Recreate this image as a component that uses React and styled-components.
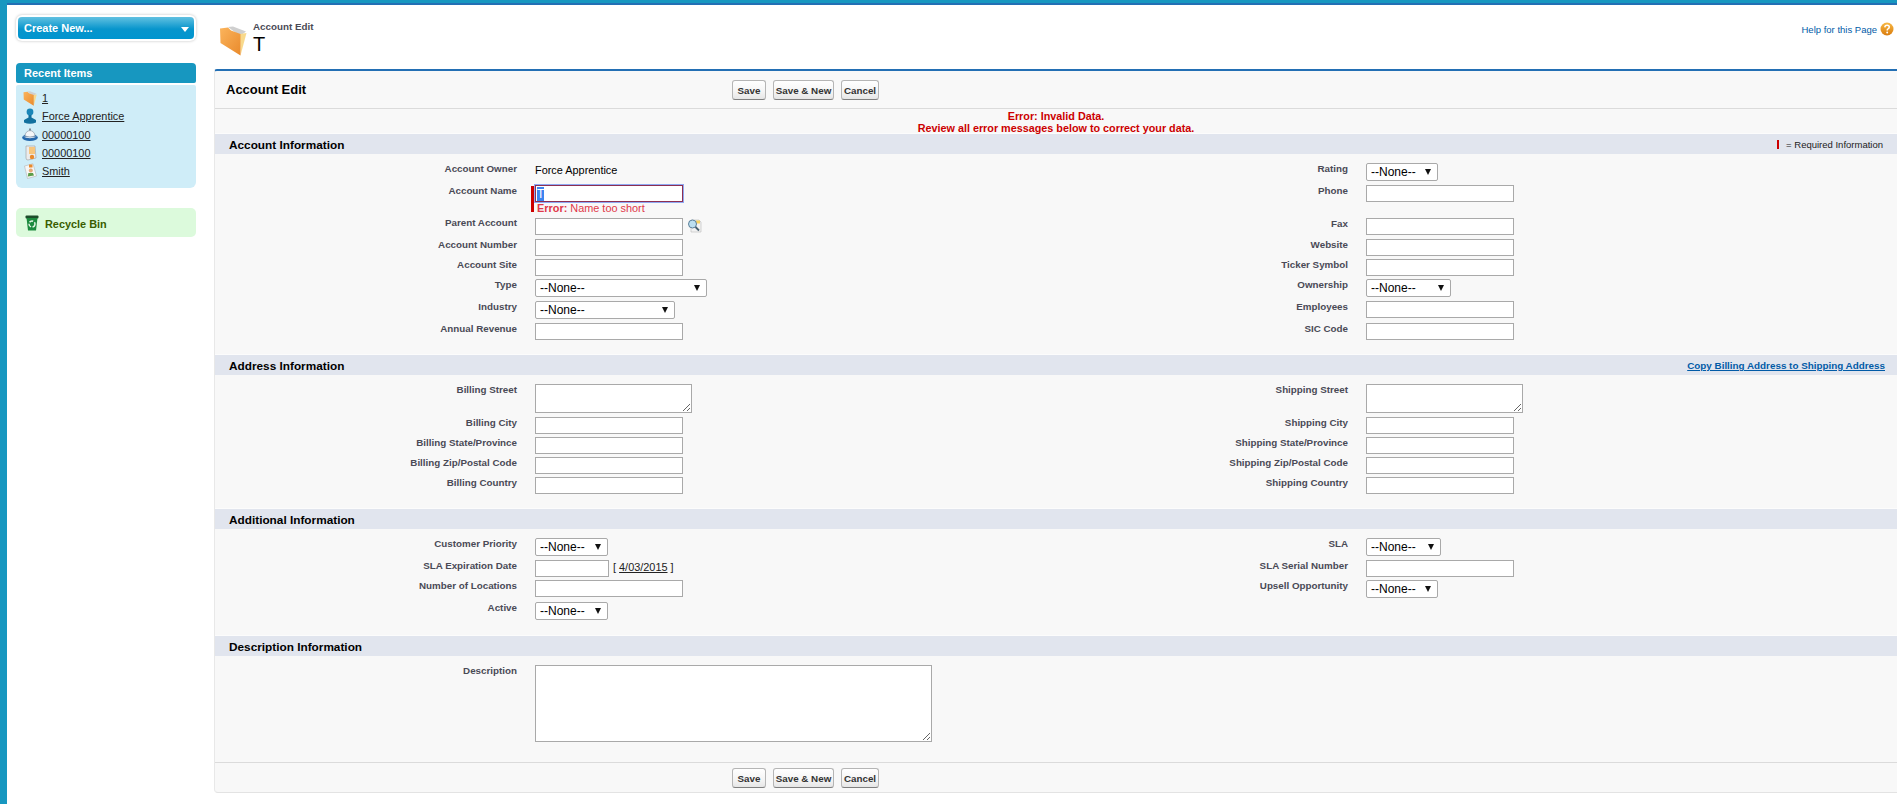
import React, { useEffect, useRef } from "react";
import styled, { createGlobalStyle } from "styled-components";

const GlobalStyle = createGlobalStyle`
  html, body {
    margin: 0;
    padding: 0;
    background: #fff;
    font-family: "Liberation Sans", Arial, sans-serif;
  }
  ::selection {
    background: #3b84f0;
    color: #fff;
  }
`;

const Page = styled.div`
  height: 804px;
  overflow: hidden;
  display: flex;
  flex-direction: column;
  background: #fff;
  border-top: 3px solid #1797c0;
  border-left: 7px solid #1797c0;
  box-sizing: border-box;
`;

const TopStripe = styled.div`
  height: 2px;
  background: #236fb4;
  flex: none;
`;

const Body = styled.div`
  display: flex;
  flex: 1;
  min-height: 0;
`;

/* sidebar */
const Sidebar = styled.aside`
  width: 207px;
  flex: none;
  box-sizing: border-box;
  padding: 12px 18px 0 9px;
`;

const CreateButton = styled.button`
  display: flex;
  align-items: center;
  justify-content: space-between;
  width: 176px;
  height: 22px;
  margin-left: 2px;
  padding: 0 5px 0 6px;
  border: 0;
  border-radius: 4px;
  background: linear-gradient(#62c1e1, #0795cc 55%, #0095cf);
  box-shadow: 0 0 0 2px #fff, 0 0 3px 2px rgba(0, 0, 0, 0.25);
  color: #fff;
  font: bold 11px "Liberation Sans", Arial, sans-serif;
`;

const CreateArrow = styled.span`
  width: 0;
  height: 0;
  border-left: 4px solid transparent;
  border-right: 4px solid transparent;
  border-top: 5px solid #fff;
  margin-top: 2px;
`;

const RecentHeader = styled.div`
  margin-top: 24px;
  height: 20px;
  line-height: 20px;
  padding-left: 8px;
  border-radius: 4px 4px 2px 2px;
  background: #1797c0;
  color: #fff;
  font-size: 11px;
  font-weight: bold;
`;

const RecentBody = styled.div`
  margin-top: 2px;
  padding: 4px 0 8px 6px;
  border-radius: 2px 2px 6px 6px;
  background: #cfedf8;
`;

const RecentRow = styled.div`
  display: flex;
  align-items: center;
  gap: 4px;
  height: ${(p) => p.$h}px;
`;

const IconSlot = styled.span`
  display: flex;
  align-items: center;
  justify-content: center;
  width: 16px;
  height: 16px;
  flex: none;
`;

const RecentLink = styled.a`
  color: #222;
  font-size: 10.9px;
  text-decoration: underline;
`;

const RecycleBox = styled.div`
  display: flex;
  align-items: center;
  gap: 6px;
  box-sizing: border-box;
  height: 29px;
  margin-top: 20px;
  padding: 2px 0 0 9px;
  border-radius: 5px;
  background: #dcfadc;
  color: #3a5d00;
  font-size: 10.9px;
  font-weight: bold;

  svg {
    margin-top: -2px;
  }
`;

/* main column */
const Main = styled.main`
  flex: 1;
  min-width: 0;
`;

const PageHead = styled.header`
  display: flex;
  height: 64px;
  box-sizing: border-box;
  padding: 15px 3px 0 5px;
`;

const HeadIcon = styled.span`
  display: block;
  width: 30px;
  margin-top: 6px;
`;

const HeadText = styled.div`
  margin-left: 4px;
  flex: 1;
`;

const HeadSmall = styled.div`
  margin-top: 1px;
  color: #4a4a56;
  font-size: 9.8px;
  font-weight: bold;
  line-height: 12px;
`;

const HeadTitle = styled.h1`
  margin: 0;
  color: #000;
  font-size: 20px;
  font-weight: normal;
  line-height: 22px;
`;

const HelpLink = styled.a`
  display: flex;
  align-items: center;
  gap: 3px;
  height: 16px;
  margin-top: 1px;
  color: #015ba7;
  font-size: 9.5px;
`;

const Panel = styled.section`
  box-sizing: border-box;
  height: 724px;
  border-top: 2px solid #236fb4;
  border-left: 1px solid #e8e8e8;
  border-bottom: 1px solid #e3e3e3;
  border-radius: 3px 0 0 4px;
  background: #f8f8f8;
`;

const TitleBar = styled.div`
  display: flex;
  align-items: flex-start;
  height: 38px;
  box-sizing: border-box;
  padding: 9px 0 0 11px;
  border-bottom: 1px solid #dbdbdb;
`;

const PanelTitle = styled.h2`
  width: 506px;
  margin: 0;
  color: #000;
  font-size: 13px;
  line-height: 20px;
`;

const ButtonRow = styled.div`
  display: flex;
  gap: 7px;
`;

const Btn = styled.button`
  width: ${(p) => p.$w}px;
  height: 20px;
  padding: 0;
  border: 1px solid #b5b5b5;
  border-bottom-color: #7f7f7f;
  border-radius: 3px;
  background: linear-gradient(#fff, #f4f4f4 60%, #e6e6e6);
  color: #333;
  font: bold 9.8px "Liberation Sans", Arial, sans-serif;
`;

const ErrorBlock = styled.div`
  height: 25px;
  box-sizing: border-box;
  padding-top: 1px;
  color: #cc0000;
  font-size: 10.8px;
  font-weight: bold;
  line-height: 12px;
  text-align: center;
`;

const SectionHead = styled.div`
  display: flex;
  align-items: center;
  justify-content: space-between;
  box-sizing: border-box;
  height: 20px;
  padding: 1px ${(p) => p.$right}px 0 14px;
  background: #e1e5ee;
  box-shadow: 0 -1px 0 #fcfcfc;
`;

const SectionTitle = styled.h3`
  margin: 0;
  color: #000;
  font-size: 11.8px;
`;

const RequiredNote = styled.span`
  display: flex;
  align-items: center;
  gap: 7px;
  color: #222;
  font-size: 9.5px;
`;

const RequiredBar = styled.i`
  width: 2px;
  height: 9px;
  background: #c00;
`;

const CopyLink = styled.a`
  color: #015ba7;
  font-size: 9.85px;
  font-weight: bold;
  text-decoration: underline;
`;

const SectionBody = styled.div`
  padding: 7px 0 ${(p) => p.$bottom}px;
`;

const Row = styled.div`
  display: grid;
  grid-template-columns: 302px 518px 313px 1fr;
  height: ${(p) => p.$h}px;
`;

const Label = styled.label`
  padding-top: ${(p) => p.$top ?? 2}px;
  color: #4a4a56;
  font-size: 9.8px;
  font-weight: bold;
  line-height: 12px;
  text-align: right;
`;

const Value = styled.div`
  position: relative;
  display: flex;
  align-items: flex-start;
  padding: 2px 0 0 18px;
  color: #000;
  font-size: 10.9px;
`;

const PlainValue = styled.span`
  line-height: 14px;
`;

const Input = styled.input`
  box-sizing: border-box;
  width: ${(p) => p.$w || 148}px;
  height: 17px;
  margin: 0;
  padding: 0 1px;
  border: 1px solid #a9a9a9;
  border-radius: 0;
  background: #fff;
  color: #000;
  font: 12px "Liberation Sans", Arial, sans-serif;
  outline: none;
`;

const FocusInput = styled(Input)`
  border-color: #8c2f52;
  box-shadow: 0 0 0 1px #8fa8f2;
`;

const TextArea = styled.textarea`
  box-sizing: border-box;
  display: block;
  width: ${(p) => p.$w}px;
  height: ${(p) => p.$h}px;
  margin: 0;
  padding: 1px;
  border: 1px solid #a9a9a9;
  border-radius: 0;
  background: #fff;
  resize: both;
`;

const SelectWrap = styled.span`
  position: relative;
  display: block;
  width: ${(p) => p.$w}px;
  height: 18px;

  &::after {
    content: "";
    position: absolute;
    top: 6px;
    right: 7px;
    border-left: 3px solid transparent;
    border-right: 3px solid transparent;
    border-top: 6px solid #111;
    pointer-events: none;
  }
`;

const Select = styled.select`
  appearance: none;
  box-sizing: border-box;
  display: block;
  width: 100%;
  height: 18px;
  margin: 0;
  padding: 0 0 0 4px;
  border: 1px solid #a9a9a9;
  border-radius: 2px;
  background: #fff;
  color: #000;
  font: 12px "Liberation Sans", Arial, sans-serif;
`;

const RequiredMark = styled.i`
  position: absolute;
  top: 3px;
  left: 14px;
  width: 3px;
  height: 26px;
  background: #c00;
`;

const Stack = styled.div`
  display: flex;
  flex-direction: column;
`;

const FieldError = styled.div`
  margin-top: 0;
  padding-left: 2px;
  color: #e0394a;
  font-size: 10.9px;
  line-height: 13px;
`;

const LookupButton = styled.span`
  display: flex;
  margin: 1px 0 0 4px;
`;

const DateHint = styled.span`
  margin-left: 4px;
  color: #222;
  line-height: 15px;
  font-size: 10.9px;

  a {
    color: #222;
    text-decoration: underline;
  }
`;

const Footer = styled.div`
  padding: 5px 0 0 517px;
  border-top: 1px solid #dbdbdb;
`;

/* drawn icons */
function FolderIcon({ size }) {
  return (
    <svg width={size} height={size} viewBox="0 0 30 30">
      <defs>
        <linearGradient id={`folder${size}`} x1="0" y1="0" x2="1" y2="1">
          <stop offset="0" stopColor="#fbb45c" />
          <stop offset="1" stopColor="#e98a2c" />
        </linearGradient>
      </defs>
      <path d="M9 1 L14 0.5 L27 5.5 L21 10 Z" fill="#cfcfcf" />
      <path d="M21 8 L27.5 7 L21.5 29.5 Z" fill="#f8d98c" />
      <path d="M1 2.5 L9 1.5 L12 4.5 L21.5 8 L21.5 29.5 L1.5 17 Z" fill={`url(#folder${size})`} />
    </svg>
  );
}

function PersonIcon() {
  return (
    <svg width="14" height="16" viewBox="0 0 14 16">
      <circle cx="7" cy="4" r="3.4" fill="#1a86b8" />
      <path d="M5.5 7 h3 v2.5 L13 12 v2.5 Q7 17 1 14.5 V12 L5.5 9.5 Z" fill="#12709e" />
    </svg>
  );
}

function BellIcon() {
  return (
    <svg width="16" height="15" viewBox="0 0 16 15">
      <ellipse cx="8" cy="10.5" rx="7.8" ry="3.6" fill="#2468ac" />
      <path d="M3 9 A5 5.4 0 0 1 13 9 Q8 11 3 9 Z" fill="#f4f6f8" stroke="#8d9aa6" strokeWidth="0.7" />
      <rect x="7" y="1.5" width="2" height="2" fill="#7d8a96" />
      <path d="M0.8 9.5 Q8 13 15.2 9.5 Q8 11 0.8 9.5 Z" fill="#e8eef4" />
    </svg>
  );
}

function ContractIcon() {
  return (
    <svg width="13" height="16" viewBox="0 0 13 16">
      <path d="M2 1 H11 L12 13 L4 15 Q2 15 2 13 Z" fill="#ececec" stroke="#9a9a9a" strokeWidth="0.6" />
      <rect x="5" y="2" width="6" height="7" fill="#f7c67d" />
      <circle cx="8" cy="12" r="2.2" fill="#e98a2c" />
    </svg>
  );
}

function ContactIcon() {
  return (
    <svg width="13" height="16" viewBox="0 0 13 16">
      <path d="M0.5 3 L9 0.8 L12.5 13 L3.5 15.5 Z" fill="#f6f6f6" stroke="#b3b3b3" strokeWidth="0.6" />
      <rect x="5" y="1.5" width="3.5" height="3" fill="#e98a2c" />
      <circle cx="6.8" cy="7.5" r="2" fill="#e6a878" />
      <path d="M3.8 13.5 L4.4 10 H9 L10 12.5 Z" fill="#5c9e4a" />
    </svg>
  );
}

function TrashIcon() {
  return (
    <svg width="14" height="16" viewBox="0 0 14 16">
      <rect x="0.5" y="0.5" width="13" height="3" rx="1" fill="#1d4d2a" />
      <path d="M1.5 3 H12.5 L11 15.5 H3 Z" fill="#1c8a3e" />
      <circle cx="7" cy="9" r="3" fill="none" stroke="#e6f5e6" strokeWidth="1.4" strokeDasharray="4 1.5" />
    </svg>
  );
}

function HelpIcon() {
  return (
    <svg width="14" height="14" viewBox="0 0 14 14">
      <defs>
        <linearGradient id="helpFill" x1="0" y1="0" x2="0" y2="1">
          <stop offset="0" stopColor="#f8b945" />
          <stop offset="1" stopColor="#d97b0c" />
        </linearGradient>
      </defs>
      <circle cx="7" cy="7" r="6.5" fill="url(#helpFill)" />
      <path d="M4.8 5.4 Q5 3.3 7.1 3.3 Q9.3 3.3 9.3 5.1 Q9.3 6.2 8 6.9 Q7.2 7.3 7.2 8.5" fill="none" stroke="#fff" strokeWidth="1.5" />
      <circle cx="7.2" cy="10.5" r="0.95" fill="#fff" />
    </svg>
  );
}

function LookupIcon() {
  return (
    <svg width="15" height="14" viewBox="0 0 15 14">
      <path d="M4 1 H12 L14 3 V13 H4 Z" fill="#f2f2f2" stroke="#b9b9b9" strokeWidth="0.6" />
      <rect x="9" y="1.5" width="4" height="3" fill="#f6d262" />
      <circle cx="5.5" cy="5" r="4" fill="#bcdff0" stroke="#5b7f99" strokeWidth="1" />
      <path d="M8.5 8 L12 11.5" stroke="#47606f" strokeWidth="1.8" />
    </svg>
  );
}

const recentItems = [
  { label: "1", h: 18, icon: <FolderIcon size={15} /> },
  { label: "Force Apprentice", h: 18, icon: <PersonIcon /> },
  { label: "00000100", h: 19, icon: <BellIcon /> },
  { label: "00000100", h: 18, icon: <ContractIcon /> },
  { label: "Smith", h: 18, icon: <ContactIcon /> },
];

function Dropdown({ w }) {
  return (
    <SelectWrap $w={w}>
      <Select defaultValue="">
        <option value="">--None--</option>
      </Select>
    </SelectWrap>
  );
}

function NameField() {
  const ref = useRef(null);
  useEffect(() => {
    ref.current.focus();
    ref.current.select();
  }, []);
  return (
    <>
      <RequiredMark />
      <Stack>
        <FocusInput ref={ref} defaultValue="T" />
        <FieldError>
          <b>Error:</b> Name too short
        </FieldError>
      </Stack>
    </>
  );
}

function FormRow({ h, left, leftTop, leftField, right, rightField }) {
  return (
    <Row $h={h}>
      <Label $top={leftTop}>{left}</Label>
      <Value>{leftField}</Value>
      <Label>{right}</Label>
      <Value>{rightField}</Value>
    </Row>
  );
}

function Buttons() {
  return (
    <ButtonRow>
      <Btn $w={34}>Save</Btn>
      <Btn $w={61}>Save &amp; New</Btn>
      <Btn $w={38}>Cancel</Btn>
    </ButtonRow>
  );
}

export default function App() {
  return (
    <Page>
      <GlobalStyle />
      <TopStripe />
      <Body>
        <Sidebar>
          <CreateButton>
            Create New...
            <CreateArrow />
          </CreateButton>
          <RecentHeader>Recent Items</RecentHeader>
          <RecentBody>
            {recentItems.map((item, i) => (
              <RecentRow key={i} $h={item.h}>
                <IconSlot>{item.icon}</IconSlot>
                <RecentLink>{item.label}</RecentLink>
              </RecentRow>
            ))}
          </RecentBody>
          <RecycleBox>
            <TrashIcon />
            Recycle Bin
          </RecycleBox>
        </Sidebar>

        <Main>
          <PageHead>
            <HeadIcon>
              <FolderIcon size={30} />
            </HeadIcon>
            <HeadText>
              <HeadSmall>Account Edit</HeadSmall>
              <HeadTitle>T</HeadTitle>
            </HeadText>
            <HelpLink>
              Help for this Page
              <HelpIcon />
            </HelpLink>
          </PageHead>

          <Panel>
            <TitleBar>
              <PanelTitle>Account Edit</PanelTitle>
              <Buttons />
            </TitleBar>
            <ErrorBlock>
              Error: Invalid Data.
              <br />
              Review all error messages below to correct your data.
            </ErrorBlock>

            <SectionHead $right={14}>
              <SectionTitle>Account Information</SectionTitle>
              <RequiredNote>
                <RequiredBar />= Required Information
              </RequiredNote>
            </SectionHead>
            <SectionBody $bottom={14}>
              <FormRow h={22} left="Account Owner" leftField={<PlainValue>Force Apprentice</PlainValue>} right="Rating" rightField={<Dropdown w={72} />} />
              <FormRow h={33} left="Account Name" leftField={<NameField />} right="Phone" rightField={<Input />} />
              <FormRow
                h={21}
                left="Parent Account"
                leftTop={1}
                leftField={
                  <>
                    <Input />
                    <LookupButton>
                      <LookupIcon />
                    </LookupButton>
                  </>
                }
                right="Fax"
                rightField={<Input />}
              />
              <FormRow h={20} left="Account Number" leftField={<Input />} right="Website" rightField={<Input />} />
              <FormRow h={20} left="Account Site" leftField={<Input />} right="Ticker Symbol" rightField={<Input />} />
              <FormRow h={22} left="Type" leftField={<Dropdown w={172} />} right="Ownership" rightField={<Dropdown w={85} />} />
              <FormRow h={22} left="Industry" leftField={<Dropdown w={140} />} right="Employees" rightField={<Input />} />
              <FormRow h={20} left="Annual Revenue" leftField={<Input />} right="SIC Code" rightField={<Input />} />
            </SectionBody>

            <SectionHead $right={12}>
              <SectionTitle>Address Information</SectionTitle>
              <CopyLink>Copy Billing Address to Shipping Address</CopyLink>
            </SectionHead>
            <SectionBody $bottom={14}>
              <FormRow h={33} left="Billing Street" leftField={<TextArea $w={157} $h={29} />} right="Shipping Street" rightField={<TextArea $w={157} $h={29} />} />
              <FormRow h={20} left="Billing City" leftField={<Input />} right="Shipping City" rightField={<Input />} />
              <FormRow h={20} left="Billing State/Province" leftField={<Input />} right="Shipping State/Province" rightField={<Input />} />
              <FormRow h={20} left="Billing Zip/Postal Code" leftField={<Input />} right="Shipping Zip/Postal Code" rightField={<Input />} />
              <FormRow h={20} left="Billing Country" leftField={<Input />} right="Shipping Country" rightField={<Input />} />
            </SectionBody>

            <SectionHead $right={14}>
              <SectionTitle>Additional Information</SectionTitle>
            </SectionHead>
            <SectionBody $bottom={14}>
              <FormRow h={22} left="Customer Priority" leftField={<Dropdown w={73} />} right="SLA" rightField={<Dropdown w={75} />} />
              <FormRow
                h={20}
                left="SLA Expiration Date"
                leftField={
                  <>
                    <Input $w={74} />
                    <DateHint>
                      [ <a>4/03/2015</a> ]
                    </DateHint>
                  </>
                }
                right="SLA Serial Number"
                rightField={<Input />}
              />
              <FormRow h={22} left="Number of Locations" leftField={<Input />} right="Upsell Opportunity" rightField={<Dropdown w={72} />} />
              <FormRow h={22} left="Active" leftField={<Dropdown w={73} />} />
            </SectionBody>

            <SectionHead $right={14}>
              <SectionTitle>Description Information</SectionTitle>
            </SectionHead>
            <SectionBody $bottom={18}>
              <FormRow h={81} left="Description" leftField={<TextArea $w={397} $h={77} />} />
            </SectionBody>

            <Footer>
              <Buttons />
            </Footer>
          </Panel>
        </Main>
      </Body>
    </Page>
  );
}
